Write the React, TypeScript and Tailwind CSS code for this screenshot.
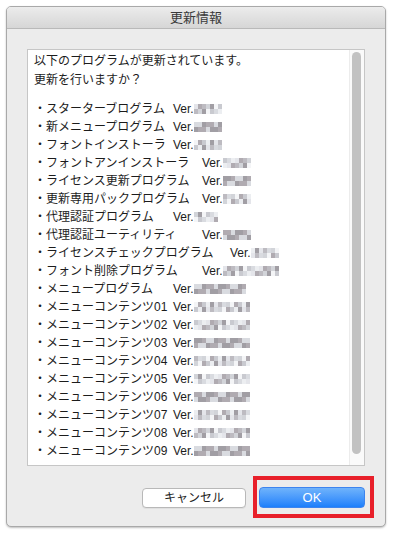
import React from "react";

type Item = { label: string; stop: number; cells: number };

// tab stops measured from the text's left edge
const S1 = 139;
const S2 = 168;
const S3 = 196;

const items: Item[] = [
  { label: "・スターターブログラム", stop: S1, cells: 7 },
  { label: "・新メニュープログラム", stop: S1, cells: 7 },
  { label: "・フォントインストーラ", stop: S1, cells: 7 },
  { label: "・フォントアンインストーラ", stop: S2, cells: 7 },
  { label: "・ライセンス更新プログラム", stop: S2, cells: 7 },
  { label: "・更新専用パックプログラム", stop: S2, cells: 7 },
  { label: "・代理認証プログラム", stop: S1, cells: 6 },
  { label: "・代理認証ユーティリティ", stop: S2, cells: 7 },
  { label: "・ライセンスチェックプログラム", stop: S3, cells: 7 },
  { label: "・フォント削除プログラム", stop: S2, cells: 14 },
  { label: "・メニュープログラム", stop: S1, cells: 13 },
  ...["01", "02", "03", "04", "05", "06", "07", "08", "09"].map((n) => ({
    label: `・メニューコンテンツ${n}`,
    stop: S1,
    cells: 14,
  })),
];

const greys = ["#eceef1", "#d9dbe0", "#c9cad0", "#bdbbc1", "#b0abb1", "#e4e5ea", "#f4f5f7", "#a19ea4", "#d2d4d9"];

function Mosaic({ cells, seed }: { cells: number; seed: number }) {
  const tone = (i: number) => greys[(i * 7 + seed * 5 + ((i * seed) % 3)) % greys.length];
  return (
    <span className="inline-flex flex-col align-middle">
      {[0, 1].map((r) => (
        <span key={r} className="flex">
          {Array.from({ length: cells }, (_, i) => (
            <span key={i} className="h-[5px] w-[4px]" style={{ background: tone(i + r * 11) }} />
          ))}
        </span>
      ))}
    </span>
  );
}

export default function App() {
  return (
    <div className="h-[533px] w-[393px] bg-white pt-[6px] pl-[6px]" style={{ fontFamily: '"Liberation Sans", "Noto Sans CJK JP", sans-serif' }}>
      <div className="flex h-[521px] w-[380px] flex-col overflow-hidden rounded-[5px] border border-[#a9a9a9] bg-[#ececec] shadow-[0_1px_2px_rgba(0,0,0,0.25)]">
        <div className="flex h-[22px] shrink-0 items-center justify-center border-b border-[#b9b9b9] bg-gradient-to-b from-[#ececec] to-[#d6d6d6] text-[13px] text-[#3a3a3a]">
          更新情報
        </div>

        <div className="flex flex-1 flex-col px-[20px] pt-[20px]">
          <div className="flex h-[417px] border border-[#c6c6c6] bg-white">
            <div className="flex-1 pl-[6px] pt-[2px] text-[12px] leading-[18px] text-[#1c1c1c]">
              <p>以下のプログラムが更新されています。</p>
              <p className="mt-[1px]">更新を行いますか？</p>
              <ul className="mt-[11px] leading-[18px]">
                {items.map((it, i) => (
                  <li key={it.label} className="flex h-[18px] items-center whitespace-nowrap">
                    <span className="inline-block shrink-0" style={{ width: it.stop }}>
                      {it.label}
                    </span>
                    <span>Ver.</span>
                    <Mosaic cells={it.cells} seed={i + 1} />
                  </li>
                ))}
              </ul>
            </div>
            <div className="w-[15px] shrink-0 border-l border-[#ececec] bg-[#fafafa] pl-[2px] pt-[2px]">
              <div className="h-[402px] w-[9px] rounded-full bg-[#c2c2c2]" />
            </div>
          </div>

          <div className="mt-[21px] flex items-center justify-end">
            <button className="flex h-[20px] w-[104px] items-center justify-center rounded-[4px] border border-[#b8b8b8] bg-white text-[12px] text-[#222] shadow-[0_1px_0_rgba(0,0,0,0.05)]">
              キャンセル
            </button>
            <div className="relative ml-[13px]">
              <button className="flex h-[21px] w-[106px] items-center justify-center rounded-[4px] border border-[#3d84ee] bg-gradient-to-b from-[#6fb3fb] to-[#1b7ffb] text-[13px] text-white">
                OK
              </button>
              <div className="pointer-events-none absolute -top-[11px] -bottom-[10px] -left-[6px] -right-[9px] border-4 border-[#e8202a]" />
            </div>
          </div>
        </div>
      </div>
    </div>
  );
}
